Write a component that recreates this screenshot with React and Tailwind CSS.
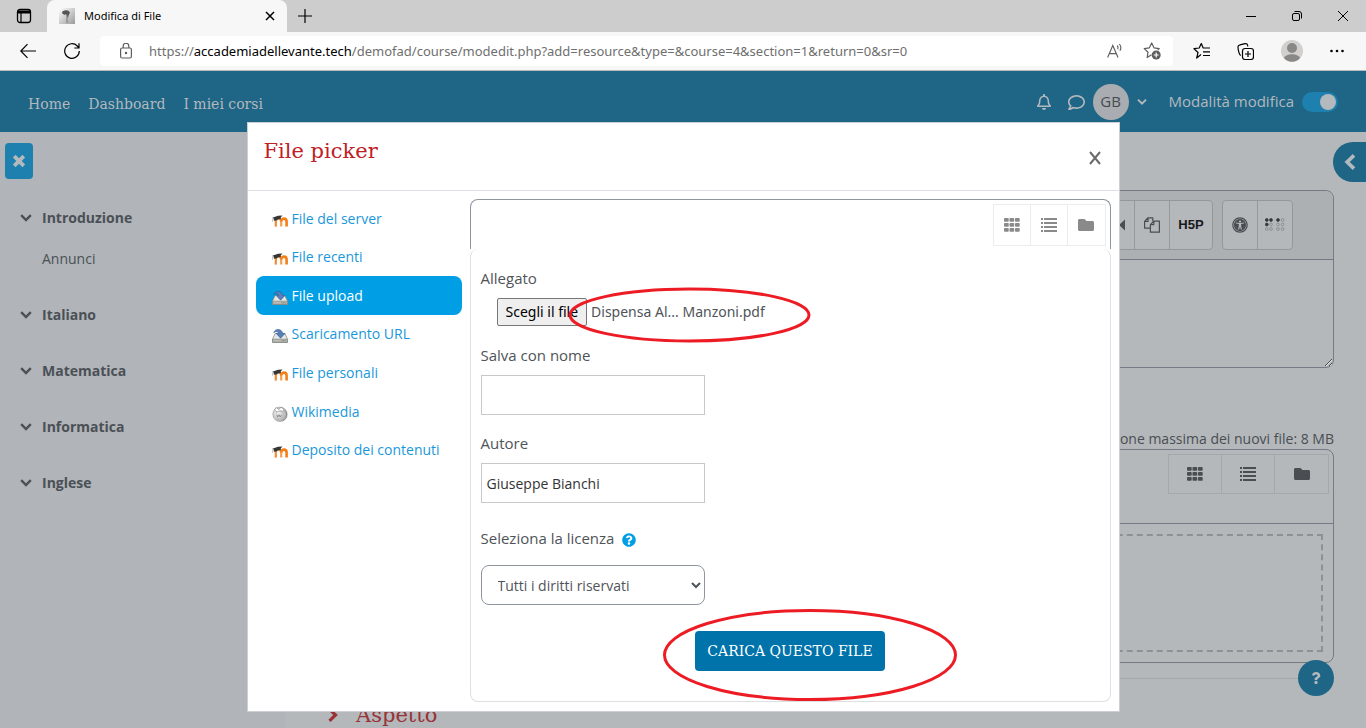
import React from "react";
import {
  FaFolder,
  FaRegBell,
  FaRegComment,
  FaQuestion,
  FaQuestionCircle,
  FaUniversalAccess,
} from "react-icons/fa";

const sections = [
  { name: "Introduzione", children: ["Annunci"] },
  { name: "Italiano", children: [] },
  { name: "Matematica", children: [] },
  { name: "Informatica", children: [] },
  { name: "Inglese", children: [] },
];

const repositories = [
  { name: "File del server", icon: MoodleIcon },
  { name: "File recenti", icon: MoodleIcon },
  { name: "File upload", icon: DriveIcon, active: true },
  { name: "Scaricamento URL", icon: DriveIcon },
  { name: "File personali", icon: MoodleIcon },
  { name: "Wikimedia", icon: GlobeIcon },
  { name: "Deposito dei contenuti", icon: MoodleIcon },
];

function ChevronDown({ className }) {
  return (
    <svg className={className} viewBox="0 0 12 12" fill="none" stroke="currentColor" strokeWidth="2.4">
      <path d="m1.200 3.200 4.800 4.800 4.800-4.800" />
    </svg>
  );
}

function ChevronSide({ className, left }) {
  return (
    <svg className={className} viewBox="0 0 14 14" fill="none" stroke="currentColor" strokeWidth="3.200">
      <path d={left ? "M10.500 1.200 4.500 7l6 5.800" : "m3.500 1.200 6 5.800-6 5.800"} />
    </svg>
  );
}

function MoodleIcon() {
  return (
    <svg className="size-4 shrink-0" viewBox="0 0 16 16" fill="none">
      <path d="M3.800 13.600V7" stroke="#ef8b35" strokeWidth="2.200" />
      <path d="M3.800 8.600c0-3.800 5.400-3.800 5.400 0v5" stroke="#f5a050" strokeWidth="2.200" />
      <path d="M9.200 8.600c0-4 5.400-4 5.400 0v5" stroke="#f57f17" strokeWidth="2.600" />
      <path d="M.300 4.700 6 2.700l4.500-.200-1.700 1.700v2l-2.700.100-2 1.400-2.300-.300-.100-2z" fill="#363636" />
      <path d="M.900 4.800.400 8.800" stroke="#a8a8a8" strokeWidth=".700" />
    </svg>
  );
}

function DriveIcon() {
  return (
    <svg className="size-4 shrink-0" viewBox="0 0 16 16">
      <path d="M3.200 5.500h9.600l2.700 5.600v3.400H.5v-3.400z" fill="#e6e8e4" stroke="#8b8e88" strokeWidth=".8" />
      <path d="M.7 11.200h14.600v3.100H.7z" fill="#b9bcb6" stroke="#777a75" strokeWidth=".6" />
      <path d="M9.500 12.800h4" stroke="#777a75" strokeWidth="1" strokeDasharray="1 .6" />
      <path d="M1.800 4.600C3 .500 9.800.2 10.700 5.400h2.300L8.600 10.200 4.200 5.400h2.400C6.300 3.200 3.600 3 1.800 4.600z" fill="#5580bd" stroke="#31578f" strokeWidth=".6" />
    </svg>
  );
}

function GlobeIcon() {
  return (
    <svg className="size-4 shrink-0" viewBox="0 0 16 16" fill="none">
      <defs>
        <radialGradient id="globe" cx=".35" cy=".4" r=".7">
          <stop offset="0" stopColor="#f4f4f4" />
          <stop offset="1" stopColor="#a4a4a4" />
        </radialGradient>
      </defs>
      <circle cx="8" cy="8.300" r="7.200" fill="url(#globe)" stroke="#9a9a9a" strokeWidth=".6" />
      <path d="M4 1.500 7 3.600 9 1l3 2.400-1.200 2L8 4.800 5 6 2.500 4z" fill="#fff" stroke="#777" strokeWidth=".6" />
      <path d="M4.500 5.800c0 3 .5 6 2.500 9M10.800 5.400c.8 3 .2 6-1.300 9.600" stroke="#b5b5b5" strokeWidth=".6" />
      <path d="m5 9 .8 2L7 8.700l1.200 2.300L9.300 9" stroke="#777" strokeWidth=".7" />
      <path d="M13.200 4.500c2.500 3.500 1.500 8.500-2.200 10" stroke="#8c8c8c" strokeWidth="1" />
    </svg>
  );
}

function GridIcon() {
  return (
    <svg className="h-3.5 w-4" viewBox="0 0 16 14" fill="currentColor">
      {[0, 5.5, 11].map((x) =>
        [0, 5, 10].map((y) => <rect key={x + "-" + y} x={x} y={y} width="4.700" height="3.800" rx=".8" />)
      )}
    </svg>
  );
}

function ListIcon() {
  return (
    <svg className="h-3.5 w-4" viewBox="0 0 16 14" fill="currentColor">
      {[0, 4, 8, 12].map((y) => (
        <g key={y}>
          <rect x="0" y={y} width="2" height="2" />
          <rect x="3" y={y} width="13" height="2" />
        </g>
      ))}
    </svg>
  );
}

function CopyIcon() {
  return (
    <svg className="size-4" viewBox="0 0 16 16" fill="none" stroke="currentColor" strokeWidth="1.200" strokeLinejoin="round">
      <path d="M6.200 11.200H.6V4.300L3.800.800h5v3.500M.8 4.400h3.200V1" />
      <path d="M9.800 4.200h5.600v11H6.400V7.600zM6.500 7.700h3.300V4.400" />
    </svg>
  );
}

function BrailleIcon() {
  return (
    <svg className="h-4 w-5" viewBox="0 0 20 16" fill="none">
      {[1.8, 6, 13, 17.6].map((x, i) =>
        [3, 7.5, 12].map((y, j) => {
          const on = (j === 0 && i < 3) || (j === 1 && i === 0);
          return (
            <circle
              key={x + "-" + y}
              cx={x}
              cy={y}
              r="1.400"
              fill={on ? "#33393e" : "none"}
              stroke={on ? "#33393e" : "#85898d"}
              strokeWidth=".8"
            />
          );
        })
      )}
    </svg>
  );
}

function Browser() {
  return (
    <header className="shrink-0 font-['Open_Sans',sans-serif] text-black">
      <div className="flex h-8 items-stretch bg-[#cdcdcd]">
        <button aria-label="Schede" className="flex w-[47px] items-center justify-center">
          <svg className="size-4" viewBox="0 0 16 16" fill="none" stroke="currentColor">
            <rect x="1.500" y="1.500" width="13" height="13" rx="2.500" strokeWidth="1.300" />
            <path d="M1.500 4h13" strokeWidth="3" />
            <path d="M5 5v9.500" strokeWidth="1.200" />
          </svg>
        </button>
        <div className="flex w-60 items-center rounded-t-lg bg-[#f7f7f7] pr-2 pl-3">
          <svg className="size-4" viewBox="0 0 16 16">
            <defs>
              <linearGradient id="fav" x1="0" x2="1" y1="0" y2="1">
                <stop offset="0" stopColor="#fff" />
                <stop offset="1" stopColor="#9a9a9a" />
              </linearGradient>
            </defs>
            <path d="M0 0h16v16H0z" fill="url(#fav)" />
            <path d="M3 5c0-3 7-4 8 0l-1 1-1 4-2-4-1 1-2-1z" fill="#555" />
            <path d="M8 7v8" stroke="#777" />
          </svg>
          <span className="ml-[9px] flex-1 text-[11px]/4 font-['Noto_Sans',sans-serif]">Modifica di File</span>
          <button aria-label="Chiudi scheda" className="p-1">
            <svg className="size-2.5" viewBox="0 0 10 10" stroke="currentColor" strokeWidth="1.500">
              <path d="m1 1 8 8M9 1 1 9" />
            </svg>
          </button>
        </div>
        <button aria-label="Nuova scheda" className="flex w-9 items-center justify-center">
          <svg className="size-3.5" viewBox="0 0 14 14" stroke="currentColor" strokeWidth="1.200">
            <path d="M7 0v14M0 7h14" />
          </svg>
        </button>
        <div className="ml-auto flex">
          <button aria-label="Riduci" className="flex w-[46px] items-center justify-center">
            <svg className="size-2.5" viewBox="0 0 10 10" stroke="currentColor">
              <path d="M0 5.500h10" />
            </svg>
          </button>
          <button aria-label="Ripristina" className="flex w-[46px] items-center justify-center">
            <svg className="size-2.5" viewBox="0 0 10 10" fill="none" stroke="currentColor">
              <rect x=".5" y="2.500" width="7" height="7" rx="1.500" />
              <path d="M2.500 .5H7A2.500 2.500 0 0 1 9.500 3v4.500" />
            </svg>
          </button>
          <button aria-label="Chiudi" className="flex w-[46px] items-center justify-center">
            <svg className="size-2.5" viewBox="0 0 10 10" stroke="currentColor">
              <path d="m0 0 10 10M10 0 0 10" />
            </svg>
          </button>
        </div>
      </div>
      <div className="flex h-[39px] items-center border-b border-[#b9bcbe] bg-[#f7f7f7]">
        <button aria-label="Indietro" className="flex w-14 items-center justify-center">
          <svg className="h-4 w-4" viewBox="0 0 16 16" fill="none" stroke="currentColor" strokeWidth="1.200">
            <path d="M16 8H1M7.500 1.200.800 8l6.700 6.800" />
          </svg>
        </button>
        <button aria-label="Aggiorna" className="flex w-8 items-center justify-center">
          <svg className="h-4 w-4" viewBox="0 0 16 16" fill="none" stroke="currentColor" strokeWidth="1.200">
            <path d="M15.300 8A7.300 7.300 0 1 1 13.300 3L15 4.800M15 .300v4.700h-4.700" />
          </svg>
        </button>
        <div className="ml-3 flex h-[30px] flex-1 items-center gap-5 rounded bg-white pr-3 pl-5 text-[#5d5d5d]">
          <svg className="h-4 w-3 shrink-0" viewBox="0 0 12 16" fill="none" stroke="currentColor" strokeWidth="1.200">
            <rect x=".600" y="5" width="10.800" height="10" rx="1.500" />
            <path d="M3.200 5V3a2.800 2.800 0 0 1 5.600 0v2" />
            <circle cx="6" cy="10" r=".600" fill="currentColor" />
          </svg>
          <span className="-ml-1 flex-1 pl-px font-['Noto_Sans',sans-serif] text-[13px]/5 whitespace-nowrap text-[#6f6f6f]">
            https://<span className="text-black">accademiadellevante.tech</span>
            /demofad/course/modedit.php?add=resource&amp;type=&amp;course=4&amp;section=1&amp;return=0&amp;sr=0
          </span>
          <button aria-label="Leggi ad alta voce">
            <svg className="size-4" viewBox="0 0 16 16" fill="none" stroke="currentColor" strokeWidth="1.100">
              <path d="M.6 14.500 5.800 2.500 11 14.500M2.300 10.600h7" />
              <path d="M10.200 2.500c1 1 1 2.600.5 3.700M12.300 1c1.800 2 1.800 4.800.600 6.800" />
            </svg>
          </button>
          <button aria-label="Aggiungi ai preferiti">
            <svg className="size-[18px]" viewBox="0 0 18 18" fill="none" stroke="currentColor" strokeWidth="1.200" strokeLinejoin="round">
              <path d="M8.500 12.700 4.200 15.500 5 10.200 1.200 6.600l5.100-.8L8.700 1l2.300 4.800 5.200.8-1.500 1.500" />
              <circle cx="13.200" cy="13" r="4.500" fill="currentColor" stroke="none" />
              <path d="M13.200 10.500v5M10.700 13h5" stroke="#fff" />
            </svg>
          </button>
        </div>
        <div className="flex items-center gap-[27px] pr-[22px] pl-5">
          <button aria-label="Preferiti">
            <svg className="h-[18px] w-[17px]" viewBox="0 0 17 18" fill="none" stroke="currentColor" strokeWidth="1.200" strokeLinejoin="round">
              <path d="M8 12.500 3.700 16 5 10.500 1 6.700l5.200-.7L8.300 1.500 10.200 6H17M10 9.800h7M10 13.500h7" />
            </svg>
          </button>
          <button aria-label="Raccolte">
            <svg className="size-[17px]" viewBox="0 0 17 17" fill="none" stroke="currentColor" strokeWidth="1.200">
              <rect x="5.500" y="5.500" width="11" height="11" rx="2.500" />
              <path d="M11 8v6M8 11h6M3.800 12.500C2 11.500 1.800 9.500 1.200 6L1 4.500C.800 3 1.500 2.200 3 1.900l5-1.200c1.500-.3 2.400.3 2.700 1.800v1" />
            </svg>
          </button>
          <button aria-label="Profilo">
            <svg className="size-[22px]" viewBox="0 0 22 22">
              <circle cx="11" cy="11" r="11" fill="#d2d0ce" />
              <circle cx="11" cy="8" r="5" fill="#8a8886" />
              <path d="M3 18c2-5 14-5 16 0-4 5-12 5-16 0z" fill="#8a8886" />
            </svg>
          </button>
          <button aria-label="Impostazioni">
            <svg className="h-4 w-3.5" viewBox="0 0 14 16" fill="currentColor">
              <circle cx="1.500" cy="8" r="1.300" />
              <circle cx="7" cy="8" r="1.300" />
              <circle cx="12.500" cy="8" r="1.300" />
            </svg>
          </button>
        </div>
      </div>
    </header>
  );
}

function Navbar() {
  return (
    <nav className="flex h-[61px] items-center bg-[#1e6586] px-7 pt-px text-sm text-[#b3b9bd]">
      <div className="flex gap-[18px] pt-1 font-['DejaVu_Serif',serif]">
        <a href="#home">Home</a>
        <a href="#dashboard">Dashboard</a>
        <a href="#corsi">I miei corsi</a>
      </div>
      <div className="ml-auto flex items-center">
        <button aria-label="Notifiche" className="mr-4">
          <FaRegBell className="size-4" />
        </button>
        <button aria-label="Messaggi" className="mr-2">
          <FaRegComment className="size-[17px]" />
        </button>
        <button className="flex items-center gap-2">
          <span className="flex size-9 items-center justify-center rounded-full bg-[#a9adb1] text-[15px] text-[#454b50]">GB</span>
          <ChevronDown className="size-2.5" />
        </button>
        <label className="ml-[22px] flex items-center gap-2 text-[15px]">
          Modalità modifica
          <input type="checkbox" role="switch" defaultChecked className="peer sr-only" />
          <span className="flex h-5 w-9 items-center justify-end rounded-full bg-[#1d80ae] pr-0.5">
            <span className="size-4 rounded-full bg-[#b3b9bd]" />
          </span>
        </label>
      </div>
    </nav>
  );
}

function Sidebar() {
  return (
    <aside className="w-[285px] shrink-0 bg-[#b1b4b8] text-sm leading-6 text-[#4a5056]">
      <button aria-label="Chiudi indice" className="mt-[11px] ml-[5px] flex h-9 w-7 items-center justify-center rounded bg-[#1d80ae] text-[#b3b9bd]">
        <svg className="size-3.5" viewBox="0 0 14 14" stroke="currentColor" strokeWidth="3.800">
          <path d="m2.200 2.200 9.600 9.600M11.800 2.200l-9.600 9.600" />
        </svg>
      </button>
      <ul className="mt-[27px] flex flex-col gap-8 pl-5">
        {sections.map((s) => (
          <li key={s.name}>
            <a href="#sezione" className="flex items-center gap-2.5 font-bold">
              <ChevronDown className="size-3" />
              {s.name}
            </a>
            {s.children.map((c) => (
              <a key={c} href="#attivita" className="mt-[17px] block pl-[22px]">
                {c}
              </a>
            ))}
          </li>
        ))}
      </ul>
    </aside>
  );
}

const editorButton = "flex h-full items-center justify-center";

function Content() {
  return (
    <main className="relative min-w-0 flex-1 bg-[#b4b8bb] pr-8 pl-10 text-sm text-[#4a4e53]">
      <div className="mt-[58px] ml-40 rounded-lg border border-[#757b84]">
        <div className="flex justify-end gap-[9px] rounded-t-lg border-b border-[#757b84] bg-[#adb0b3] py-[9px] pr-10">
          <div className="flex h-[50px] divide-x divide-[#94989d] rounded border border-[#94989d] bg-[#b4b8bb]">
            <button aria-label="Video" className={editorButton + " w-[35px]"}>
              <svg className="size-4" viewBox="0 0 16 16" fill="currentColor">
                <path d="M0 4h9v8H0zM16 2.500v11L10 8z" />
              </svg>
            </button>
            <button aria-label="Gestisci file" className={editorButton + " w-[35px]"}>
              <CopyIcon />
            </button>
            <button aria-label="Inserisci H5P" className={editorButton + " w-[42px] font-['Liberation_Sans',sans-serif] text-[13px] font-black text-[#16191c]"}>
              H5P
            </button>
          </div>
          <div className="flex h-[50px] divide-x divide-[#94989d] rounded border border-[#94989d] bg-[#b4b8bb]">
            <button aria-label="Accessibilità" className={editorButton + " w-[35px]"}>
              <FaUniversalAccess className="size-4" />
            </button>
            <button aria-label="Screen reader" className={editorButton + " w-[34px]"}>
              <BrailleIcon />
            </button>
          </div>
        </div>
        <textarea aria-label="Descrizione" className="block h-[107px] w-full resize-y bg-transparent" />
      </div>
      <p className="mt-[60px] text-right leading-[21px]">Dimensione massima dei nuovi file: 8 MB</p>
      <div className="ml-40 rounded-lg border border-[#757b84]">
        <div className="flex h-[74px] items-start justify-end border-b border-[#757b84] p-1">
          <ViewButtons size="h-[38px] w-[53px]" line="divide-[#a4a8ac] border-[#a4a8ac]" />
        </div>
        <div className="p-2.5">
          <div className="h-[118px] border-2 border-dashed border-[#8d9195]" />
        </div>
      </div>
      <hr className="mt-[15px] border-[#a4a8ac]" />
      <h2 className="mt-5 flex items-center gap-4 font-['DejaVu_Serif',serif] text-[21px] leading-8 text-[#983338]">
        <ChevronSide className="ml-px size-3.5" />
        Aspetto
      </h2>
      <button aria-label="Apri cassetto blocchi" className="absolute top-2.5 right-0 flex h-10 w-[33px] items-center justify-center rounded-l-full bg-[#1e6586] text-[#b3b9bd]">
        <ChevronSide left className="size-4" />
      </button>
      <button aria-label="Aiuto" className="absolute right-8 bottom-8 flex size-9 items-center justify-center rounded-full bg-[#1e6586] text-[#b3b9bd]">
        <FaQuestion className="size-3" />
      </button>
    </main>
  );
}

function ViewButtons({ size, line }) {
  const views = [
    ["Icone", <GridIcon />],
    ["Elenco", <ListIcon />],
    ["Albero", <FaFolder className="size-4" />],
  ];
  return (
    <div className={"flex divide-x border " + line}>
      {views.map(([name, icon]) => (
        <button key={name} aria-label={name} className={"flex items-center justify-center " + size}>
          {icon}
        </button>
      ))}
    </div>
  );
}

function FilePicker() {
  return (
    <section role="dialog" aria-label="File picker" className="relative w-[873px] max-w-full border border-[#ccd0d4] bg-white text-sm leading-6 text-[#4f5459]">
      <div className="flex h-[68px] items-start justify-between border-b border-[#dedfe4] px-4">
        <h3 className="pt-3 font-['DejaVu_Serif',serif] text-[21px] leading-8 text-[#be2026]">File picker</h3>
        <button aria-label="Chiudi" className="pt-[27px] text-[#6b6b6b]">
          <svg className="size-4" viewBox="0 0 16 16" stroke="currentColor" strokeWidth="2">
            <path d="m3 2 10 12M13 2 3 14" />
          </svg>
        </button>
      </div>
      <div className="flex gap-2 p-2 pb-[9px]">
        <ul className="grid h-[270px] w-[206px] shrink-0 auto-rows-fr">
          {repositories.map(({ name, icon: Icon, active }) => (
            <li key={name}>
              <a
                href="#repository"
                className={"flex h-full items-center gap-1 rounded-lg px-4 pt-px " + (active ? "bg-[#009ee5] text-white" : "text-[#1a97da]")}
              >
                <span className="pt-1">
                  <Icon />
                </span>
                {name}
              </a>
            </li>
          ))}
        </ul>
        <div className="min-w-0 flex-1">
          <div className="flex h-[50px] justify-end rounded-t-lg border border-b-0 border-[#8f959e] pt-1 pr-1">
            <div className="text-[#8a8a8a]">
              <ViewButtons size="h-10 w-[37px]" line="divide-[#ececec] border-[#ececec]" />
            </div>
          </div>
          <form onSubmit={(e) => e.preventDefault()} className="rounded-lg border border-t-0 border-[#dedfe1] px-2.5 pt-[17px] pb-[30px]">
            <label htmlFor="file" className="block text-[15px]/6">
              Allegato
            </label>
            <div className="mt-2 flex h-7 items-center gap-1 pl-4 font-['Noto_Sans',sans-serif]">
              <input id="file" type="file" className="sr-only" />
              <label htmlFor="file" className="flex h-full items-center rounded-xs border border-[#767676] bg-[#efefef] px-2 text-black">
                Scegli il file
              </label>
              <span>Dispensa Al... Manzoni.pdf</span>
            </div>
            <label htmlFor="title" className="mt-[17px] block text-[15px]/6">
              Salva con nome
            </label>
            <input id="title" type="text" className="mt-2 block h-10 w-56 border border-[#c8c8c8] px-[5px]" />
            <label htmlFor="author" className="mt-4 block text-[15px]/6">
              Autore
            </label>
            <input id="author" type="text" defaultValue="Giuseppe Bianchi" className="mt-2 block h-10 w-56 border border-[#c8c8c8] px-[5px] text-[#333]" />
            <div className="mt-[23px] flex items-center gap-2">
              <label htmlFor="license" className="text-[15px]/6">
                Seleziona la licenza
              </label>
              <button type="button" aria-label="Aiuto sulla licenza" className="pt-1 text-[#009ee5]">
                <FaQuestionCircle className="size-3.5" />
              </button>
            </div>
            <select id="license" className="mt-[15px] block h-10 w-56 rounded-lg border border-[#8f959e] bg-white px-3">
              <option>Tutti i diritti riservati</option>
            </select>
            <div className="mt-[26px] flex justify-center">
              <button type="submit" className="h-10 rounded bg-[#0073aa] px-3 font-['DejaVu_Serif',serif] text-sm text-white">
                CARICA QUESTO FILE
              </button>
            </div>
          </form>
        </div>
      </div>
      <svg className="pointer-events-none absolute top-[164px] left-[320px] h-14 w-[243px]" viewBox="0 0 243 56" fill="none">
        <ellipse cx="121.500" cy="28" rx="119.500" ry="26" stroke="#ed1c24" strokeWidth="3" />
      </svg>
      <svg className="pointer-events-none absolute top-[486px] left-[414px] h-[92px] w-[296px]" viewBox="0 0 296 92" fill="none">
        <ellipse cx="148" cy="46" rx="145.500" ry="44.500" stroke="#ed1c24" strokeWidth="3" />
      </svg>
    </section>
  );
}

export default function App() {
  return (
    <div className="flex h-screen flex-col overflow-hidden font-['Open_Sans',sans-serif]">
      <Browser />
      <div className="relative flex min-h-0 flex-1 flex-col overflow-hidden">
        <Navbar />
        <div className="flex min-h-0 flex-1">
          <Sidebar />
          <Content />
        </div>
        <div className="absolute inset-0 flex items-start justify-center pt-[51px]">
          <FilePicker />
        </div>
      </div>
    </div>
  );
}
